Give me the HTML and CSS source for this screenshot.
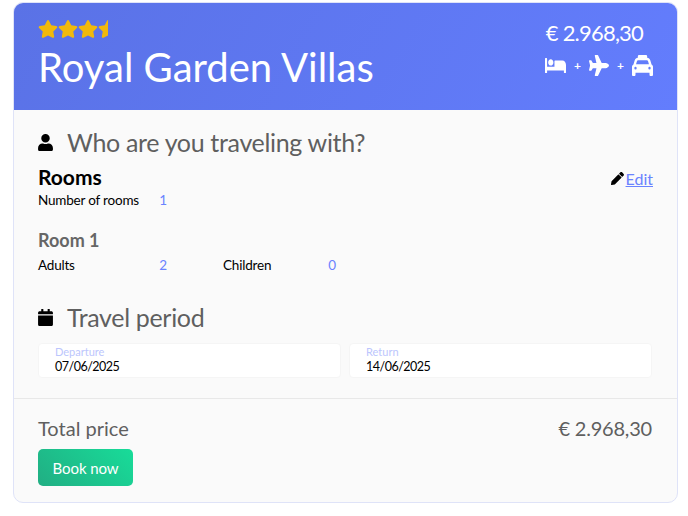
FILE: index.html
```html
<!DOCTYPE html>
<html>

<head>
  <meta charset="utf-8">
  <meta name="viewport" content="width=device-width, initial-scale=1">
  <title>Royal Garden Villas</title>
  <link rel="stylesheet" href="styles.css">
</head>

<body>
  <div class="card">
    <div class="hero">
      <div class="hero-left">
        <div class="stars">
          <svg class="star" viewBox="0 0 576 512"><path d="M259.3 17.8L194 150.2 47.9 171.5c-26.2 3.8-36.7 36.1-17.7 54.6l105.7 103-25 145.5c-4.5 26.3 23.2 46 46.4 33.7L288 439.6l130.7 68.7c23.2 12.2 50.9-7.4 46.4-33.7l-25-145.5 105.7-103c19-18.5 8.5-50.8-17.7-54.6L382 150.2 316.7 17.8c-11.7-23.6-45.6-23.9-57.4 0z"/></svg>
          <svg class="star" viewBox="0 0 576 512"><path d="M259.3 17.8L194 150.2 47.9 171.5c-26.2 3.8-36.7 36.1-17.7 54.6l105.7 103-25 145.5c-4.5 26.3 23.2 46 46.4 33.7L288 439.6l130.7 68.7c23.2 12.2 50.9-7.4 46.4-33.7l-25-145.5 105.7-103c19-18.5 8.5-50.8-17.7-54.6L382 150.2 316.7 17.8c-11.7-23.6-45.6-23.9-57.4 0z"/></svg>
          <svg class="star" viewBox="0 0 576 512"><path d="M259.3 17.8L194 150.2 47.9 171.5c-26.2 3.8-36.7 36.1-17.7 54.6l105.7 103-25 145.5c-4.5 26.3 23.2 46 46.4 33.7L288 439.6l130.7 68.7c23.2 12.2 50.9-7.4 46.4-33.7l-25-145.5 105.7-103c19-18.5 8.5-50.8-17.7-54.6L382 150.2 316.7 17.8c-11.7-23.6-45.6-23.9-57.4 0z"/></svg>
          <svg class="star half" viewBox="0 0 288 512"><path d="M288 0c-11.4 0-22.8 5.9-28.7 17.8L194 150.2 47.9 171.4c-26.2 3.8-36.7 36.1-17.7 54.6l105.7 103-25 145.5c-4.5 26.1 23 46 46.4 33.7L288 439.6V0z"/></svg>
        </div>
        <h1>Royal Garden Villas</h1>
      </div>
      <div class="hero-right">
        <div class="hero-price">€ 2.968,30</div>
        <div class="includes">
          <svg class="ic-bed" viewBox="0 64 640 384" preserveAspectRatio="none"><path d="M176 256c44.11 0 80-35.89 80-80s-35.89-80-80-80-80 35.89-80 80 35.89 80 80 80zm352-128H304c-8.84 0-16 7.16-16 16v144H64V80c0-8.84-7.16-16-16-16H16C7.16 64 0 71.16 0 80v352c0 8.84 7.16 16 16 16h32c8.84 0 16-7.16 16-16v-48h512v48c0 8.84 7.16 16 16 16h32c8.84 0 16-7.16 16-16V240c0-61.86-50.14-112-112-112z"/></svg>
          <span class="plus">+</span>
          <svg class="ic-plane" viewBox="0 0 576 512" preserveAspectRatio="none"><path d="M480 192H365.71L260.61 8.06A16.014 16.014 0 0 0 246.71 0h-65.5c-10.63 0-18.3 10.17-15.38 20.39L214.86 192H112l-43.2-57.6c-3.02-4.03-7.77-6.4-12.8-6.4H16.01C5.6 128-2.04 137.78.49 147.88L32 256 .49 364.12C-2.04 374.22 5.6 384 16.01 384H56c5.04 0 9.78-2.37 12.8-6.4L112 320h102.86l-49.03 171.6c-2.92 10.22 4.75 20.4 15.38 20.4h65.5c5.74 0 11.04-3.08 13.89-8.06L365.71 320H480c35.35 0 96-28.65 96-64s-60.65-64-96-64z"/></svg>
          <span class="plus">+</span>
          <svg class="ic-taxi" viewBox="0 0 576 512" preserveAspectRatio="none"><path d="M192 0c-17.7 0-32 14.3-32 32V64c-38.6 2.2-72.3 27.3-85.2 64.1L39.6 228.8C16.4 238.4 0 261.3 0 288V480c0 17.7 14.3 32 32 32H64c17.7 0 32-14.3 32-32V432H480v48c0 17.7 14.3 32 32 32h32c17.7 0 32-14.3 32-32V288c0-26.7-16.4-49.6-39.6-59.2L501.2 128.1C488.3 91.3 454.6 66.2 416 64V32c0-17.7-14.3-32-32-32H192zM165.4 128H410.6c13.6 0 25.7 8.6 30.2 21.4L465.1 224H110.9l24.2-74.6c4.5-12.8 16.6-21.4 30.3-21.4zM96 288a32 32 0 1 1 0 64 32 32 0 1 1 0-64zm384 0a32 32 0 1 1 0 64 32 32 0 1 1 0-64z"/></svg>
        </div>
      </div>
    </div>

    <div class="main">
      <div class="section-title">
        <svg class="ic-title" viewBox="0 0 448 512"><path d="M224 256c70.7 0 128-57.3 128-128S294.7 0 224 0 96 57.3 96 128s57.3 128 128 128zm89.6 32h-16.7c-22.2 10.2-46.9 16-72.9 16s-50.6-5.8-72.9-16h-16.7C60.2 288 0 348.2 0 422.4V464c0 26.5 21.5 48 48 48h352c26.5 0 48-21.5 48-48v-41.6c0-74.2-60.2-134.4-134.4-134.4z"/></svg>
        <h2>Who are you traveling with?</h2>
      </div>

      <div class="rooms-head">
        <div>
          <h3>Rooms</h3>
          <div class="row">
            <span class="label">Number of rooms</span>
            <span class="value">1</span>
          </div>
        </div>
        <div class="edit">
          <svg class="ic-edit" viewBox="0 0 512 512"><path d="M497.9 142.1l-46.1 46.1c-4.7 4.7-12.3 4.7-17 0l-111-111c-4.7-4.7-4.7-12.3 0-17l46.1-46.1c18.7-18.7 49.1-18.7 67.9 0l60.1 60.1c18.8 18.7 18.8 49.1 0 67.9zM284.2 99.8L21.6 362.4.4 483.9c-2.9 16.4 11.4 30.6 27.8 27.8l121.5-21.3 262.6-262.6c4.7-4.7 4.7-12.3 0-17l-111-111c-4.8-4.7-12.4-4.7-17.1 0z"/></svg>
          <a href="#">Edit</a>
        </div>
      </div>

      <h4>Room 1</h4>
      <div class="row guests">
        <span class="label">Adults</span>
        <span class="value">2</span>
        <span class="label second">Children</span>
        <span class="value">0</span>
      </div>

      <div class="section-title period">
        <svg class="ic-title" viewBox="0 0 448 512"><path d="M12 192h424c6.6 0 12 5.4 12 12v260c0 26.5-21.5 48-48 48H48c-26.5 0-48-21.5-48-48V204c0-6.6 5.4-12 12-12zm436-44v-36c0-26.5-21.5-48-48-48h-48V12c0-6.6-5.4-12-12-12h-40c-6.6 0-12 5.4-12 12v52H160V12c0-6.6-5.4-12-12-12h-40c-6.6 0-12 5.4-12 12v52H48C21.5 64 0 85.5 0 112v36c0 6.6 5.4 12 12 12h424c6.6 0 12-5.4 12-12z"/></svg>
        <h2>Travel period</h2>
      </div>

      <div class="dates">
        <div class="date-box">
          <div class="date-label">Departure</div>
          <div class="date-value">07/06/2025</div>
        </div>
        <div class="date-box">
          <div class="date-label">Return</div>
          <div class="date-value">14/06/2025</div>
        </div>
      </div>
    </div>

    <div class="total">
      <div class="total-row">
        <span>Total price</span>
        <span class="total-price">€ 2.968,30</span>
      </div>
      <button class="book">Book now</button>
    </div>
  </div>
</body>

</html>
```

FILE: styles.css
```css
* {
  margin: 0;
  padding: 0;
  box-sizing: border-box;
}

body {
  font-family: 'Lato', 'Open Sans', Arial, sans-serif;
  background: white;
  color: #000;
  padding: 2px 10px 14px 13px;
}

.card {
  width: 665px;
  height: 501px;
  background: #fafafa;
  border: 1px solid #dfe3f8;
  border-radius: 10px;
  overflow: hidden;
}

.hero {
  height: 107px;
  background: linear-gradient(120deg, #5a72e6 0%, #637dfd 100%);
  color: white;
  padding: 17px 24px 0 24px;
  display: flex;
  justify-content: space-between;
}

.stars {
  display: flex;
  height: 20px;
}

.star {
  width: 20px;
  height: 18px;
  fill: #f1b90c;
}

.star.half {
  width: 10px;
}

h1 {
  font-size: 40px;
  font-weight: 400;
  line-height: 48px;
  margin-top: 3px;
}

.hero-right {
  display: flex;
  flex-direction: column;
  align-items: flex-end;
}

.hero-price {
  font-size: 22px;
  line-height: 28px;
  margin-top: -1px;
  margin-right: 10px;
  letter-spacing: -0.8px;
}

.includes {
  display: flex;
  align-items: center;
  gap: 8px;
  margin-top: 8px;
  fill: white;
}

.plus {
  width: 7px;
  font-size: 12px;
  font-weight: 700;
  text-align: center;
}

.ic-bed {
  width: 21px;
  height: 15px;
}

.ic-plane {
  width: 20px;
  height: 21px;
}

.ic-taxi {
  width: 21px;
  height: 21px;
}

.main {
  height: 289px;
  padding: 16px 25px 0 24px;
  border-bottom: 1px solid #e8e8e8;
}

.section-title {
  display: flex;
  align-items: center;
  gap: 14px;
  color: #5f5f5f;
}

.section-title.period {
  margin-top: 27px;
}

.ic-title {
  width: 15px;
  height: 17px;
  fill: #000;
}

h2 {
  font-size: 25px;
  font-weight: 400;
  line-height: 32px;
  letter-spacing: -0.33px;
}

.rooms-head {
  display: flex;
  justify-content: space-between;
  margin-top: 6px;
}

h3 {
  font-size: 21px;
  font-weight: 700;
  line-height: 26px;
}

h4 {
  font-size: 18px;
  font-weight: 700;
  line-height: 24px;
  color: #666;
  margin-top: 19px;
}

.row {
  display: flex;
  font-size: 13.5px;
  line-height: 18px;
  margin-top: 1px;
  letter-spacing: -0.2px;
}

.row.guests {
  margin-top: 4px;
}

.label {
  width: 120px;
}

.label.second {
  width: 104px;
  margin-left: 55px;
}

.value {
  color: #6a83ff;
  width: 10px;
  text-align: center;
}

.edit {
  display: flex;
  align-items: center;
  gap: 2px;
  height: 24px;
  margin-top: 2px;
  margin-right: -1px;
  font-size: 16px;
}

.edit a {
  color: #6a83ff;
}

.ic-edit {
  width: 13px;
  height: 13px;
  fill: #000;
}

.dates {
  display: flex;
  gap: 8px;
  margin-top: 10px;
}

.date-box {
  flex: 1;
  height: 35px;
  background: white;
  border: 1px solid #f5f5f5;
  border-radius: 4px;
  padding: 2px 16px 0;
}

.date-label {
  font-size: 11px;
  line-height: 12px;
  color: #bcc6fd;
}

.date-value {
  font-size: 12.5px;
  line-height: 18px;
  letter-spacing: -0.5px;
}

.total {
  padding: 16px 25px 0 24px;
}

.total-row {
  display: flex;
  justify-content: space-between;
  font-size: 20px;
  line-height: 27px;
  color: #5f5f5f;
}

.total-price {
  letter-spacing: -0.2px;
}

.book {
  display: block;
  width: 95px;
  height: 37px;
  margin-top: 7px;
  background: linear-gradient(45deg, #21ae83 0%, #18dc99 100%);
  color: white;
  border: none;
  border-radius: 5px;
  font-family: inherit;
  font-size: 15px;
  letter-spacing: -0.1px;
}
```
